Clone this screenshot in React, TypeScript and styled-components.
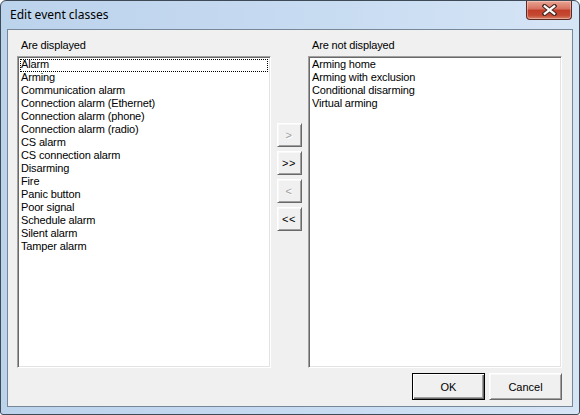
import React from "react";
import styled, { createGlobalStyle, css } from "styled-components";

const Global = createGlobalStyle`
  html, body { margin: 0; padding: 0; background: #ffffff; }
  * { box-sizing: border-box; }
`;

const Window = styled.div`
  width: 580px;
  height: 415px;
  border: 1px solid #3f4a57;
  border-radius: 6px 6px 3px 3px;
  background: linear-gradient(to right, #bcd3ec 0%, #c7dbf1 55%, #d6e5f6 100%);
  padding: 0 6px 7px 6px;
  display: flex;
  flex-direction: column;
  overflow: hidden;
`;

const TitleBar = styled.div`
  height: 28px;
  display: flex;
  justify-content: space-between;
  align-items: flex-start;
  flex: none;
`;

const Title = styled.div`
  font-family: "Noto Sans", "Open Sans", sans-serif;
  font-size: 12px;
  color: #000000;
  padding: 6px 0 0 3px;
  line-height: 16px;
`;

const CloseButton = styled.div`
  width: 46px;
  height: 19px;
  margin-right: 1px;
  border: 1px solid #5b2a22;
  border-top: none;
  border-radius: 0 0 4px 4px;
  background: linear-gradient(to bottom, #e9a593 0%, #d6705f 45%, #c23d28 50%, #c54a34 80%, #d7826a 100%);
  display: flex;
  align-items: center;
  justify-content: center;
  box-shadow: inset 0 0 0 1px rgba(255, 220, 210, 0.45);
`;

const Client = styled.div`
  flex: 1;
  border: 1px solid #76879a;
  background: #f0f0f0;
  padding: 9px 10px 6px 9px;
  display: flex;
  flex-direction: column;
  font-family: "Liberation Sans", Arial, sans-serif;
  font-size: 11px;
  letter-spacing: -0.15px;
  color: #000;
`;

const Main = styled.div`
  display: grid;
  grid-template-columns: 254px 37px 254px;
`;

const Column = styled.div`
  display: flex;
  flex-direction: column;
  gap: 4px;
`;

const Label = styled.div`
  height: 13px;
  line-height: 13px;
  padding-left: 4px;
`;

const ListBox = styled.div`
  height: 312px;
  background: #ffffff;
  border-style: solid;
  border-width: 1px;
  border-color: #a0a0a0 #ffffff #ffffff #a0a0a0;
  box-shadow: inset 1px 1px 0 #696969, inset -1px -1px 0 #e3e3e3;
  padding: 2px;
  display: flex;
  flex-direction: column;
`;

const Item = styled.div<{ $focused?: boolean }>`
  height: 13px;
  line-height: 11px;
  padding-left: 1px;
  white-space: nowrap;
  ${(p) =>
    p.$focused &&
    css`
      outline: 1px dotted #000000;
      outline-offset: -1px;
    `}
`;

const ButtonColumn = styled.div`
  display: flex;
  flex-direction: column;
  align-items: center;
  gap: 4px;
  padding-top: 84px;
  padding-right: 1px;
`;

const classicButton = css`
  background: #f0f0f0;
  border-style: solid;
  border-width: 1px;
  border-color: #ffffff #696969 #696969 #ffffff;
  box-shadow: inset 1px 1px 0 #f8f8f8, inset -1px -1px 0 #a0a0a0;
  font-family: "Liberation Sans", Arial, sans-serif;
  font-size: 11px;
  display: flex;
  align-items: center;
  justify-content: center;
`;

const ArrowButton = styled.div<{ $disabled?: boolean }>`
  ${classicButton}
  width: 25px;
  height: 24px;
  letter-spacing: 0.5px;
  color: ${(p) => (p.$disabled ? "#a0a0a0" : "#000000")};
  text-shadow: ${(p) => (p.$disabled ? "1px 1px 0 #ffffff" : "none")};
`;

const Footer = styled.div`
  margin-top: 5px;
  display: flex;
  justify-content: flex-end;
  gap: 4px;
`;

const DialogButton = styled.div<{ $default?: boolean }>`
  ${classicButton}
  width: 73px;
  height: 27px;
  letter-spacing: 0;
  ${(p) =>
    p.$default &&
    css`
      border-color: #000000;
      box-shadow: inset 1px 1px 0 #ffffff, inset -1px -1px 0 #696969, inset -2px -2px 0 #a0a0a0;
    `}
`;

const displayed = [
  "Alarm",
  "Arming",
  "Communication alarm",
  "Connection alarm (Ethernet)",
  "Connection alarm (phone)",
  "Connection alarm (radio)",
  "CS alarm",
  "CS connection alarm",
  "Disarming",
  "Fire",
  "Panic button",
  "Poor signal",
  "Schedule alarm",
  "Silent alarm",
  "Tamper alarm",
];

const notDisplayed = [
  "Arming home",
  "Arming with exclusion",
  "Conditional disarming",
  "Virtual arming",
];

const CloseGlyph = () => (
  <svg width="15" height="12" viewBox="0 0 15 12">
    <path d="M2.5 2 L12.5 10 M12.5 2 L2.5 10" stroke="#4a2a24" strokeWidth="4.2" strokeLinecap="square" />
    <path d="M2.8 2.3 L12.2 9.7 M12.2 2.3 L2.8 9.7" stroke="#ffffff" strokeWidth="2.2" strokeLinecap="square" />
  </svg>
);

export default function App() {
  return (
    <>
      <Global />
      <Window>
        <TitleBar>
          <Title>Edit event classes</Title>
          <CloseButton>
            <CloseGlyph />
          </CloseButton>
        </TitleBar>
        <Client>
          <Main>
            <Column>
              <Label>Are displayed</Label>
              <ListBox>
                {displayed.map((t, i) => (
                  <Item key={t} $focused={i === 0}>
                    {t}
                  </Item>
                ))}
              </ListBox>
            </Column>
            <ButtonColumn>
              <ArrowButton $disabled>&gt;</ArrowButton>
              <ArrowButton>&gt;&gt;</ArrowButton>
              <ArrowButton $disabled>&lt;</ArrowButton>
              <ArrowButton>&lt;&lt;</ArrowButton>
            </ButtonColumn>
            <Column>
              <Label>Are not displayed</Label>
              <ListBox>
                {notDisplayed.map((t) => (
                  <Item key={t}>{t}</Item>
                ))}
              </ListBox>
            </Column>
          </Main>
          <Footer>
            <DialogButton $default>OK</DialogButton>
            <DialogButton>Cancel</DialogButton>
          </Footer>
        </Client>
      </Window>
    </>
  );
}
